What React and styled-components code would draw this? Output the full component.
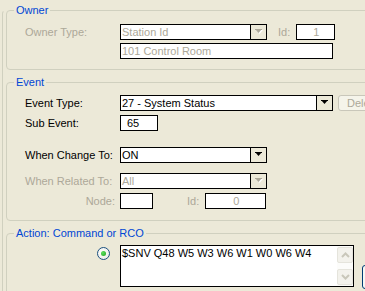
import styled, { createGlobalStyle } from "styled-components";

const GlobalStyle = createGlobalStyle`
  html, body {
    margin: 0;
    padding: 0;
    background: #ece9d8;
    overflow: hidden;
  }
  body {
    font-family: "Liberation Sans", Arial, sans-serif;
    font-size: 11px;
    color: #000;
  }
`;

const Frame = styled.div`
  position: relative;
  width: 365px;
  height: 291px;
  padding: 4px 0 0 6px;
  box-sizing: border-box;
  overflow: hidden;

  &::before {
    content: "";
    position: absolute;
    left: 2px;
    top: 10px;
    bottom: -4px;
    width: 4px;
    border-left: 1px solid #d0d0bf;
    border-top: 1px solid #d0d0bf;
    border-top-left-radius: 4px;
    border-top-color: transparent;
  }
`;

const Group = styled.fieldset`
  margin: ${(p) => p.$gap || 0}px 0 0 0;
  padding: 0;
  width: 400px;
  border: 1px solid #d0d0bf;
  border-radius: 4px;
  min-width: 0;
`;

const Legend = styled.legend`
  margin-left: 7px;
  padding: 0 2px;
  color: #0046d5;
  line-height: 13px;
`;

const Body = styled.div`
  padding: ${(p) => p.$top}px 0 ${(p) => p.$bottom}px 18px;
`;

const Row = styled.div`
  display: flex;
  align-items: center;
  height: 16px;
  margin-top: ${(p) => p.$mt || 0}px;
`;

const Label = styled.div`
  width: 95px;
  flex: none;
  box-sizing: border-box;
  color: ${(p) => (p.$disabled ? "#aca899" : "#000")};
  text-align: ${(p) => (p.$right ? "right" : "left")};
  padding-right: ${(p) => (p.$right ? 5 : 0)}px;
  white-space: nowrap;
`;

const Combo = styled.div`
  display: flex;
  width: ${(p) => p.$w}px;
  height: 16px;
  box-sizing: border-box;
  border: 1px solid #000;
  background: #fff;
  flex: none;
`;

const ComboText = styled.div`
  flex: 1;
  padding-left: 1px;
  line-height: 14px;
  color: ${(p) => (p.$disabled ? "#aca899" : "#000")};
  white-space: nowrap;
  overflow: hidden;
`;

const ComboButton = styled.div`
  width: 15px;
  flex: none;
  border-left: 1px solid #000;
  background: #ece9d8;
  display: flex;
  align-items: center;
  justify-content: center;
`;

const Field = styled.div`
  width: ${(p) => p.$w}px;
  height: 16px;
  box-sizing: border-box;
  border: 1px solid #000;
  background: #fff;
  flex: none;
  line-height: 14px;
  padding-left: ${(p) => p.$pad ?? 1}px;
  text-align: ${(p) => (p.$center ? "center" : "left")};
  color: ${(p) => (p.$disabled ? "#aca899" : "#000")};
  white-space: nowrap;
  overflow: hidden;
`;

const Indent = styled.div`
  width: 95px;
  flex: none;
`;

const SmallLabel = styled.div`
  color: #aca899;
  margin: 0 ${(p) => p.$after}px 0 ${(p) => p.$before}px;
`;

const Button = styled.div`
  height: 16px;
  width: 60px;
  flex: none;
  box-sizing: border-box;
  margin-left: 5px;
  border: 1px solid #c9c7ba;
  border-radius: 3px;
  background: #f5f4ea;
  color: #aca899;
  line-height: 14px;
  padding-left: 8px;
  white-space: nowrap;
`;

const ActionRow = styled.div`
  display: flex;
  align-items: flex-start;
`;

const RadioSlot = styled.div`
  width: 95px;
  flex: none;
  padding: 2px 0 0 72px;
  box-sizing: border-box;
`;

const Radio = styled.div`
  width: 13px;
  height: 13px;
  box-sizing: border-box;
  border: 1px solid #1c5180;
  border-radius: 50%;
  background: radial-gradient(circle at 40% 40%, #fff, #e8e8e0);
  display: flex;
  align-items: center;
  justify-content: center;

  &::after {
    content: "";
    width: 5px;
    height: 5px;
    border-radius: 50%;
    background: radial-gradient(circle at 35% 35%, #5ce05c, #21a121);
  }
`;

const TextArea = styled.div`
  display: flex;
  width: 234px;
  height: 42px;
  box-sizing: border-box;
  border: 1px solid #000;
  background: #fff;
  flex: none;
`;

const AreaText = styled.div`
  flex: 1;
  padding: 1px 0 0 1px;
  line-height: 13px;
  white-space: nowrap;
`;

const ScrollBar = styled.div`
  width: 16px;
  flex: none;
  display: flex;
  flex-direction: column;
  justify-content: space-between;
  padding: 1px 0;
  background: #fcfcfa;
`;

const ScrollButton = styled.div`
  height: 16px;
  box-sizing: border-box;
  border: 1px solid #e5e4dc;
  border-radius: 2px;
  background: #f3f2ec;
  display: flex;
  align-items: center;
  justify-content: center;
`;

const SideButton = styled.div`
  width: 30px;
  height: 24px;
  flex: none;
  margin: 20px 0 0 8px;
  box-sizing: border-box;
  border: 1px solid #003c74;
  border-radius: 3px;
  background: #f7f7f3;
`;

const NextRow = styled.div`
  display: flex;
  margin-top: 2px;
  height: 16px;
`;

const NextField = styled.div`
  width: 129px;
  height: 16px;
  box-sizing: border-box;
  border: 1px solid #000;
  background: #fff;
`;

const NextButton = styled.div`
  width: 58px;
  height: 16px;
  margin-left: 5px;
  box-sizing: border-box;
  border: 1px solid #c9c7ba;
  border-radius: 3px;
  background: #f5f4ea;
`;

function Arrow({ disabled }) {
  return (
    <svg width="8" height="6" viewBox="0 0 8 6">
      {disabled && <polygon points="1,1 8,1 4.5,5" fill="#fff" />}
      <polygon points="0,0 7,0 3.5,4" fill={disabled ? "#aca899" : "#000"} />
      <rect x="0" y="0" width="7" height="1" fill={disabled ? "#aca899" : "#000"} />
    </svg>
  );
}

function Chevron({ up }) {
  return (
    <svg width="9" height="6" viewBox="0 0 9 6">
      <polyline
        points={up ? "1,5 4.5,1.5 8,5" : "1,1 4.5,4.5 8,1"}
        fill="none"
        stroke="#c9c7ba"
        strokeWidth="2"
      />
    </svg>
  );
}

function ComboBox({ w, value, disabled }) {
  return (
    <Combo $w={w}>
      <ComboText $disabled={disabled}>{value}</ComboText>
      <ComboButton>
        <Arrow disabled={disabled} />
      </ComboButton>
    </Combo>
  );
}

export default function App() {
  return (
    <>
      <GlobalStyle />
      <Frame>
        <Group>
          <Legend>Owner</Legend>
          <Body $top={7} $bottom={10}>
            <Row>
              <Label $disabled>Owner Type:</Label>
              <ComboBox w={147} value="Station Id" disabled />
              <SmallLabel $before={11} $after={6}>Id:</SmallLabel>
              <Field $w={39} $center $disabled>1</Field>
            </Row>
            <Row $mt={3}>
              <Indent />
              <Field $w={213} $disabled>101 Control Room</Field>
            </Row>
          </Body>
        </Group>

        <Group $gap={6}>
          <Legend>Event</Legend>
          <Body $top={6} $bottom={11}>
            <Row>
              <Label>Event Type:</Label>
              <ComboBox w={213} value="27 - System Status" />
              <Button>Delete</Button>
            </Row>
            <Row $mt={4}>
              <Label>Sub Event:</Label>
              <Field $w={38} $pad={6}>65</Field>
            </Row>
            <Row $mt={16}>
              <Label>When Change To:</Label>
              <ComboBox w={147} value="ON" />
            </Row>
            <Row $mt={10}>
              <Label $disabled>When Related To:</Label>
              <ComboBox w={147} value="All" disabled />
            </Row>
            <Row $mt={4}>
              <Label $disabled $right>Node:</Label>
              <Field $w={33} />
              <SmallLabel $before={34} $after={6}>Id:</SmallLabel>
              <Field $w={61} $center $disabled>0</Field>
            </Row>
          </Body>
        </Group>

        <Group $gap={6}>
          <Legend>Action: Command or RCO</Legend>
          <Body $top={5} $bottom={10}>
            <ActionRow>
              <RadioSlot>
                <Radio />
              </RadioSlot>
              <TextArea>
                <AreaText>$SNV Q48 W5 W3 W6 W1 W0 W6 W4</AreaText>
                <ScrollBar>
                  <ScrollButton>
                    <Chevron up />
                  </ScrollButton>
                  <ScrollButton>
                    <Chevron />
                  </ScrollButton>
                </ScrollBar>
              </TextArea>
              <SideButton />
            </ActionRow>
            <NextRow>
              <Indent />
              <NextField />
              <NextButton />
            </NextRow>
          </Body>
        </Group>
      </Frame>
    </>
  );
}
